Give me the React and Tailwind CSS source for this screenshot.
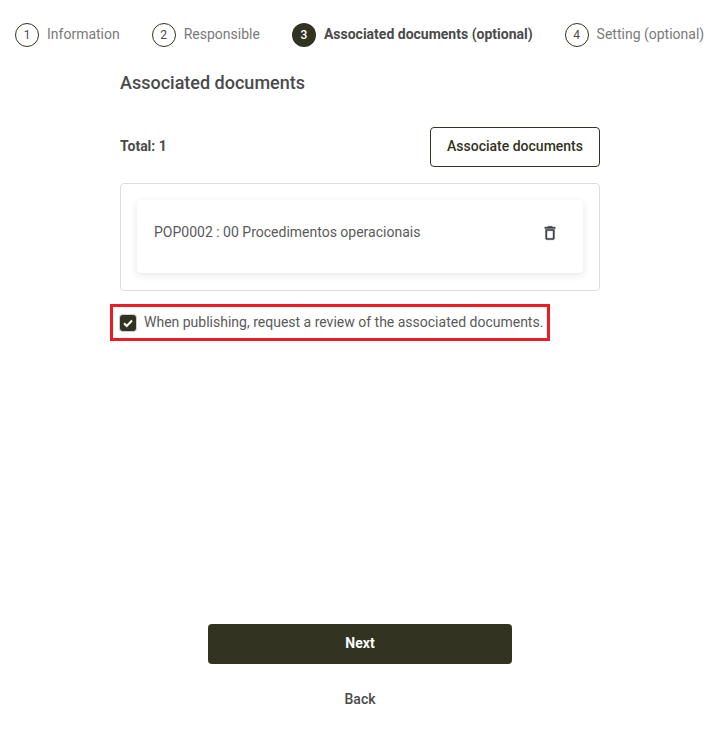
import React from 'react';

const steps = [
  { n: 1, label: 'Information' },
  { n: 2, label: 'Responsible' },
  { n: 3, label: 'Associated documents (optional)', active: true },
  { n: 4, label: 'Setting (optional)' },
];

const Step = ({ n, label, active }) => (
  <div className="flex items-center gap-2 whitespace-nowrap">
    {active ? (
      <span className="w-6 h-6 rounded-full bg-[#323321] text-white text-xs font-medium flex items-center justify-center pb-px">{n}</span>
    ) : (
      <span className="w-6 h-6 rounded-full border border-[#323321] text-[#4a4a4a] text-xs flex items-center justify-center pb-px">{n}</span>
    )}
    <span className={active ? 'text-sm font-bold text-[#4a4a4a] pb-0.5' : 'text-sm text-[#7a7a7a] pb-0.5'}>{label}</span>
  </div>
);

export default function App() {
  return (
    <div className="w-[723px] h-[734px] bg-white flex flex-col font-['Roboto',sans-serif]">
      {/* Stepper */}
      <div className="flex gap-8 pl-[15px] pt-[23px]">
        {steps.map((s) => (
          <Step key={s.n} {...s} />
        ))}
      </div>

      <div className="w-[480px] ml-[120px] mt-[23px]">
        <h2 className="text-lg leading-[26px] font-medium text-[#4a4a4a]">Associated documents</h2>

        <div className="flex items-center justify-between mt-[31px]">
          <span className="text-sm font-bold text-[#4a4a4a] pb-0.5">Total: 1</span>
          <button className="w-[170px] h-10 rounded border border-[#323321] text-sm font-medium text-[#323321] bg-white pb-0.5">
            Associate documents
          </button>
        </div>

        {/* Document list */}
        <div className="mt-4 border border-[#dddddd] rounded pt-4 pl-4 pr-4 pb-[17px]">
          <div className="h-[73px] rounded bg-white shadow-[0_2px_8px_rgba(0,0,0,0.1)] flex items-start justify-between pl-[17px] pr-6 pt-[22px]">
            <span className="text-sm leading-5 text-[#5a5a5a]">POP0002 : 00 Procedimentos operacionais</span>
            <svg viewBox="0 0 24 24" className="w-[18px] h-[18px] text-[#3f444a] mt-0.5" fill="currentColor" stroke="currentColor" strokeWidth="0.5">
              <path d="M6 19c0 1.1.9 2 2 2h8c1.1 0 2-.9 2-2V7H6v12zM8 9h8v10H8V9zm7.5-5l-1-1h-5l-1 1H5v2h14V4z" />
            </svg>
          </div>
        </div>

        {/* Highlighted checkbox */}
        <div className="relative flex items-center gap-2 mt-6 h-4">
          <div className="absolute -left-[10px] -top-[11px] w-[440px] h-[37px] border-[3px] border-[#ed1c24]" />
          <span className="w-4 h-4 rounded-[3px] bg-[#323321] ring-1 ring-[#c5d0dc] flex items-center justify-center">
            <svg viewBox="0 0 24 24" className="w-3 h-3" fill="none" stroke="white" strokeWidth="4">
              <path d="M4 12.5l5.5 5.5L20 7" />
            </svg>
          </span>
          <span className="text-sm text-[#5a5a5a] whitespace-nowrap pb-0.5">When publishing, request a review of the associated documents.</span>
        </div>
      </div>

      {/* Footer actions */}
      <div className="mt-auto flex flex-col items-center w-[304px] ml-[208px] pb-[25px]">
        <button className="w-full h-10 rounded bg-[#323321] text-sm font-bold text-white pb-0.5">Next</button>
        <button className="mt-[25px] h-5 text-sm font-medium text-[#4a4a4a]">Back</button>
      </div>
    </div>
  );
}
